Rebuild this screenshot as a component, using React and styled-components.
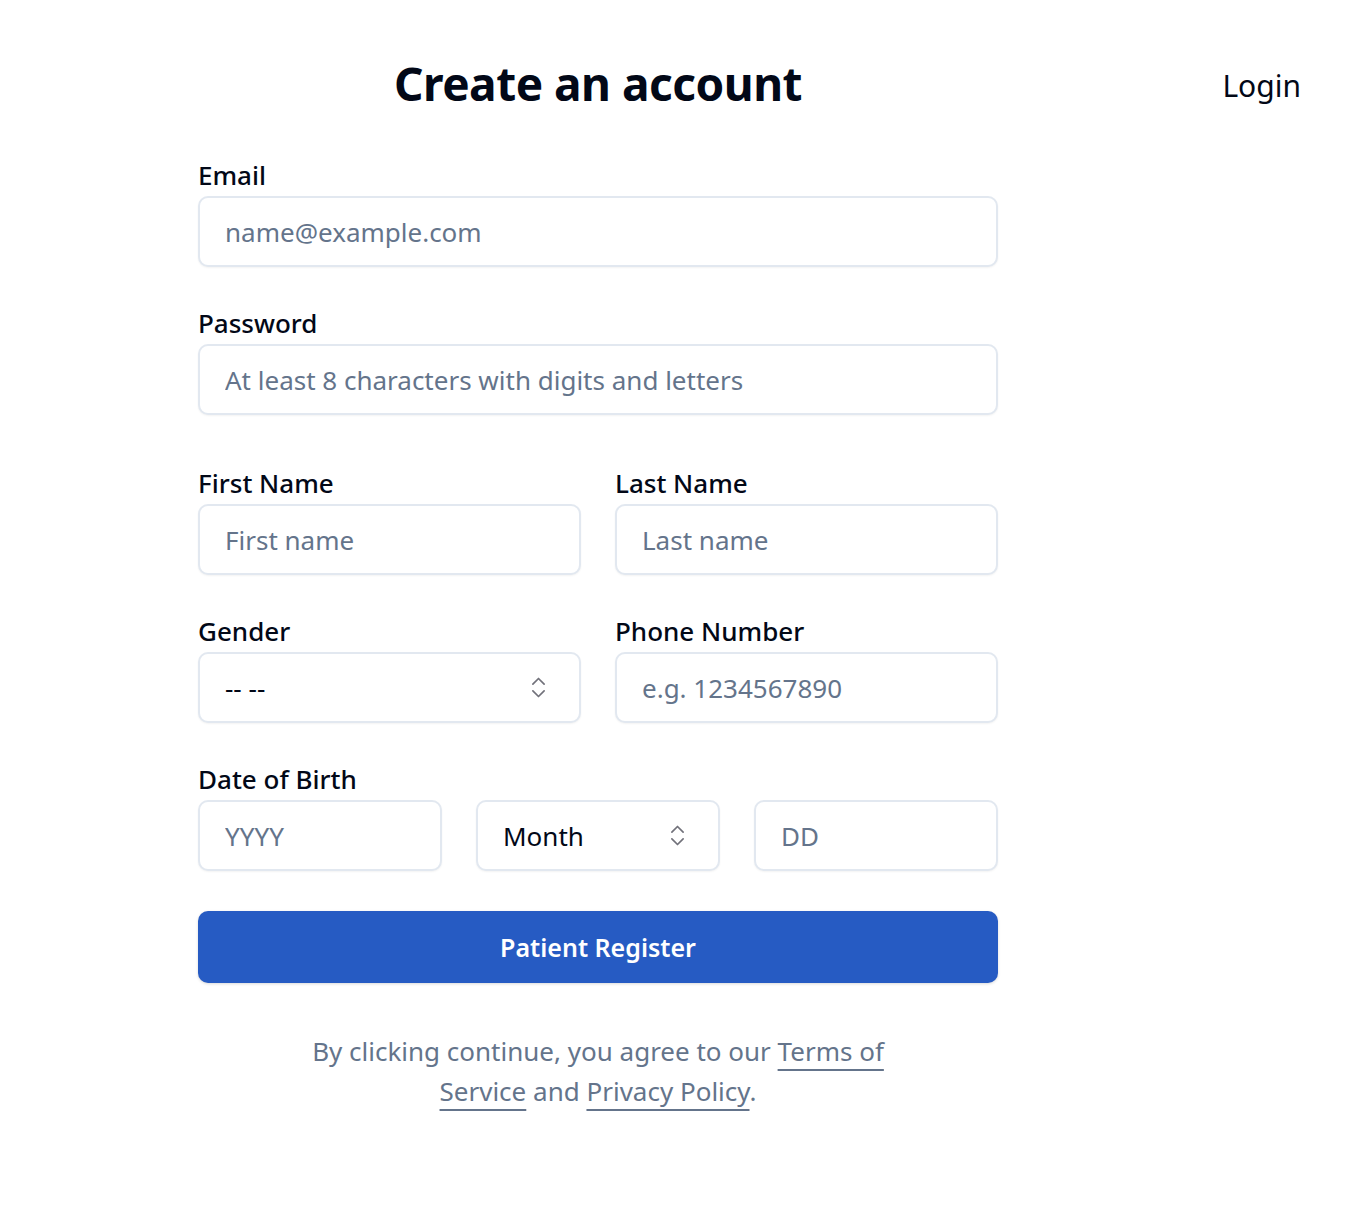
import React from 'react';
import styled, { createGlobalStyle } from 'styled-components';
import { ChevronsUpDown } from 'lucide-react';

const GlobalStyle = createGlobalStyle`
  * { box-sizing: border-box; }
  body {
    margin: 0;
    background: #ffffff;
    color: #020817;
    font-family: "Noto Sans", "Open Sans", Arial, sans-serif;
  }
`;

const Page = styled.div`
  display: flex;
  justify-content: space-between;
  align-items: flex-start;
  min-height: 1222px;
  padding: 0 49px 0 198px;
`;

const Main = styled.main`
  width: 800px;
  display: flex;
  flex-direction: column;
`;

const Title = styled.h1`
  margin: 53px 0 0;
  font-size: 46px;
  line-height: 60px;
  font-weight: 700;
  text-align: center;
  letter-spacing: -0.5px;
  color: #020817;
`;

const LoginLink = styled.a`
  margin-top: 66px;
  font-size: 30px;
  line-height: 40px;
  color: #020817;
  text-decoration: none;
  cursor: pointer;
`;

const Form = styled.form`
  display: flex;
  flex-direction: column;
  margin-top: 46px;
`;

const Field = styled.div`
  display: flex;
  flex-direction: column;
  margin-top: ${p => p.$gap || 0}px;
`;

const Label = styled.label`
  font-size: 26px;
  line-height: 32px;
  font-weight: 500;
  margin-bottom: 5px;
  color: #020817;
`;

const Row = styled.div`
  display: grid;
  grid-template-columns: repeat(${p => p.$cols}, 1fr);
  column-gap: 34px;
  margin-top: ${p => p.$gap || 0}px;
`;

const Input = styled.input`
  height: 71px;
  width: 100%;
  padding: 0 25px;
  border: 2px solid #e2e8f0;
  border-radius: 10px;
  background: #ffffff;
  box-shadow: 0 1px 2px rgba(0, 0, 0, 0.05);
  font-family: inherit;
  font-size: 26px;
  color: #020817;
  outline: none;

  &::placeholder {
    color: #64748b;
  }
`;

const SelectBox = styled.div`
  height: 71px;
  display: flex;
  align-items: center;
  justify-content: space-between;
  padding: 0 27px 0 25px;
  border: 2px solid #e2e8f0;
  border-radius: 10px;
  background: #ffffff;
  box-shadow: 0 1px 2px rgba(0, 0, 0, 0.05);
  font-size: 26px;
  color: #020817;
  cursor: pointer;

  svg {
    color: #71717a;
  }
`;

const SubmitButton = styled.button`
  margin-top: 40px;
  height: 72px;
  width: 100%;
  border: none;
  border-radius: 10px;
  background: #265bc3;
  color: #ffffff;
  font-family: inherit;
  font-size: 25px;
  font-weight: 600;
  box-shadow: 0 1px 3px rgba(0, 0, 0, 0.15);
  cursor: pointer;
`;

const Terms = styled.p`
  margin: 48px auto 0;
  width: 600px;
  text-align: center;
  font-size: 26px;
  line-height: 40px;
  color: #64748b;
`;

const TermsLink = styled.a`
  color: #64748b;
  text-decoration: underline;
  text-underline-offset: 8px;
  text-decoration-thickness: 2px;
  cursor: pointer;
`;

const Select = ({ value }) => (
  <SelectBox>
    <span>{value}</span>
    <ChevronsUpDown size={27} strokeWidth={1.5} />
  </SelectBox>
);

export default function App() {
  return (
    <>
      <GlobalStyle />
      <Page>
        <Main>
          <Title>Create an account</Title>
          <Form onSubmit={e => e.preventDefault()}>
            <Field>
              <Label>Email</Label>
              <Input type="email" placeholder="name@example.com" />
            </Field>
            <Field $gap={40}>
              <Label>Password</Label>
              <Input type="password" placeholder="At least 8 characters with digits and letters" />
            </Field>
            <Row $cols={2} $gap={52}>
              <Field>
                <Label>First Name</Label>
                <Input placeholder="First name" />
              </Field>
              <Field>
                <Label>Last Name</Label>
                <Input placeholder="Last name" />
              </Field>
            </Row>
            <Row $cols={2} $gap={40}>
              <Field>
                <Label>Gender</Label>
                <Select value="-- --" />
              </Field>
              <Field>
                <Label>Phone Number</Label>
                <Input placeholder="e.g. 1234567890" />
              </Field>
            </Row>
            <Field $gap={40}>
              <Label>Date of Birth</Label>
              <Row $cols={3}>
                <Input placeholder="YYYY" />
                <Select value="Month" />
                <Input placeholder="DD" />
              </Row>
            </Field>
            <SubmitButton type="submit">Patient Register</SubmitButton>
          </Form>
          <Terms>
            By clicking continue, you agree to our <TermsLink>Terms of Service</TermsLink> and{' '}
            <TermsLink>Privacy Policy</TermsLink>.
          </Terms>
        </Main>
        <LoginLink>Login</LoginLink>
      </Page>
    </>
  );
}
